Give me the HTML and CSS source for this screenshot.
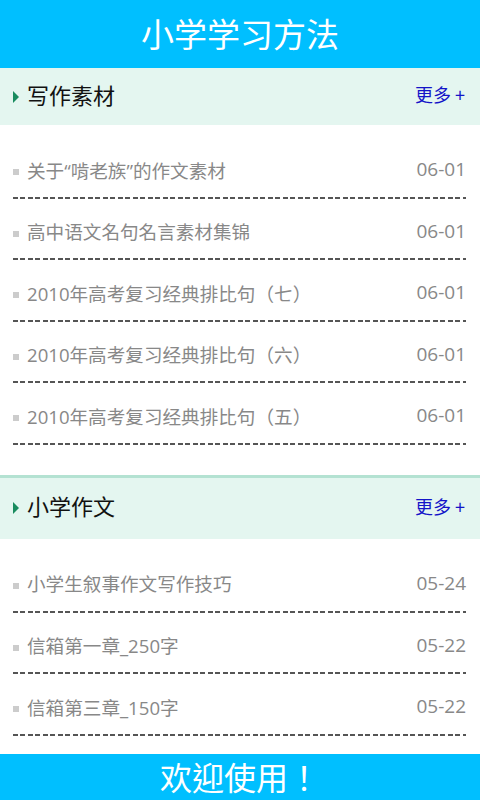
FILE: index.html
```html
<!DOCTYPE html>
<html>
<head>
    <meta charset="utf-8">
    <title>小学学习方法</title>
    <link rel="stylesheet" href="styles.css">
</head>
<body>
    <div class="topbar">小学学习方法</div>

    <div class="section first">
        <div class="section-head">
            <span class="arrow"></span>
            <span class="section-title">写作素材</span>
            <span class="more">更多 +</span>
        </div>
        <ul class="list">
            <li class="item"><span class="dot"></span><span class="item-title">关于“啃老族”的作文素材</span><span class="date">06-01</span></li>
            <li class="item"><span class="dot"></span><span class="item-title">高中语文名句名言素材集锦</span><span class="date">06-01</span></li>
            <li class="item"><span class="dot"></span><span class="item-title">2010年高考复习经典排比句（七）</span><span class="date">06-01</span></li>
            <li class="item"><span class="dot"></span><span class="item-title">2010年高考复习经典排比句（六）</span><span class="date">06-01</span></li>
            <li class="item"><span class="dot"></span><span class="item-title">2010年高考复习经典排比句（五）</span><span class="date">06-01</span></li>
        </ul>
    </div>

    <div class="section second">
        <div class="section-head">
            <span class="arrow"></span>
            <span class="section-title">小学作文</span>
            <span class="more">更多 +</span>
        </div>
        <ul class="list">
            <li class="item"><span class="dot"></span><span class="item-title">小学生叙事作文写作技巧</span><span class="date">05-24</span></li>
            <li class="item"><span class="dot"></span><span class="item-title">信箱第一章_250字</span><span class="date">05-22</span></li>
            <li class="item"><span class="dot"></span><span class="item-title">信箱第三章_150字</span><span class="date">05-22</span></li>
        </ul>
    </div>

    <div class="bottombar">欢迎使用！</div>
</body>
</html>
```

FILE: styles.css
```css
body {
    margin: 0;
    height: 800px;
    overflow: hidden;
    position: relative;
    background-color: #fff;
    font-family: "Open Sans", "Noto Sans CJK SC", sans-serif;
}

.topbar {
    height: 68px;
    line-height: 66px;
    background-color: rgb(0, 191, 255);
    color: #fff;
    font-family: "Noto Sans CJK SC", sans-serif;
    font-size: 33px;
    text-align: center;
}

.section-head {
    display: flex;
    align-items: center;
    height: 57px;
    padding: 0 15px 0 13px;
    background-color: rgb(228, 246, 240);
}

.second .section-head {
    border-top: 3px solid rgb(180, 226, 210);
    height: 61px;
}

.arrow {
    width: 0;
    height: 0;
    border-top: 6px solid transparent;
    border-bottom: 6px solid transparent;
    border-left: 6px solid rgb(25, 140, 95);
    margin: 0 8px 0 0;
}

.section-title {
    flex: 1;
    font-family: "Noto Sans CJK SC", sans-serif;
    font-size: 22px;
    line-height: 26px;
    padding-bottom: 6px;
    color: #111;
}

.more {
    font-family: "Noto Sans CJK SC", sans-serif;
    font-size: 18px;
    line-height: 22px;
    padding-bottom: 5px;
    color: rgb(20, 20, 200);
}

.list {
    list-style: none;
    margin: 0;
    padding: 12px 14px 0 13px;
}

.first .list {
    padding-bottom: 30px;
}

.second .list {
    padding-top: 12px;
}

.item {
    display: flex;
    align-items: center;
    height: 24px;
    padding: 20px 0 17.6px;
    background-image: repeating-linear-gradient(to right, #555 0 5px, transparent 5px 7.5px);
    background-size: 100% 2px;
    background-repeat: no-repeat;
    background-position: bottom left;
}

.dot {
    width: 6px;
    height: 6px;
    background-color: #ccc;
    margin: 6px 8px 0 0;
}

.item-title {
    flex: 1;
    font-family: "Open Sans", "Noto Sans CJK TC", sans-serif;
    font-size: 18.6px;
    color: #888;
}

.date {
    font-size: 19px;
    color: #888;
}

.bottombar {
    position: absolute;
    left: 0;
    right: 0;
    bottom: 0;
    height: 46px;
    line-height: 44px;
    background-color: rgb(0, 191, 255);
    color: #fff;
    font-family: "Noto Sans CJK TC", sans-serif;
    font-size: 32px;
    text-align: center;
}
```
